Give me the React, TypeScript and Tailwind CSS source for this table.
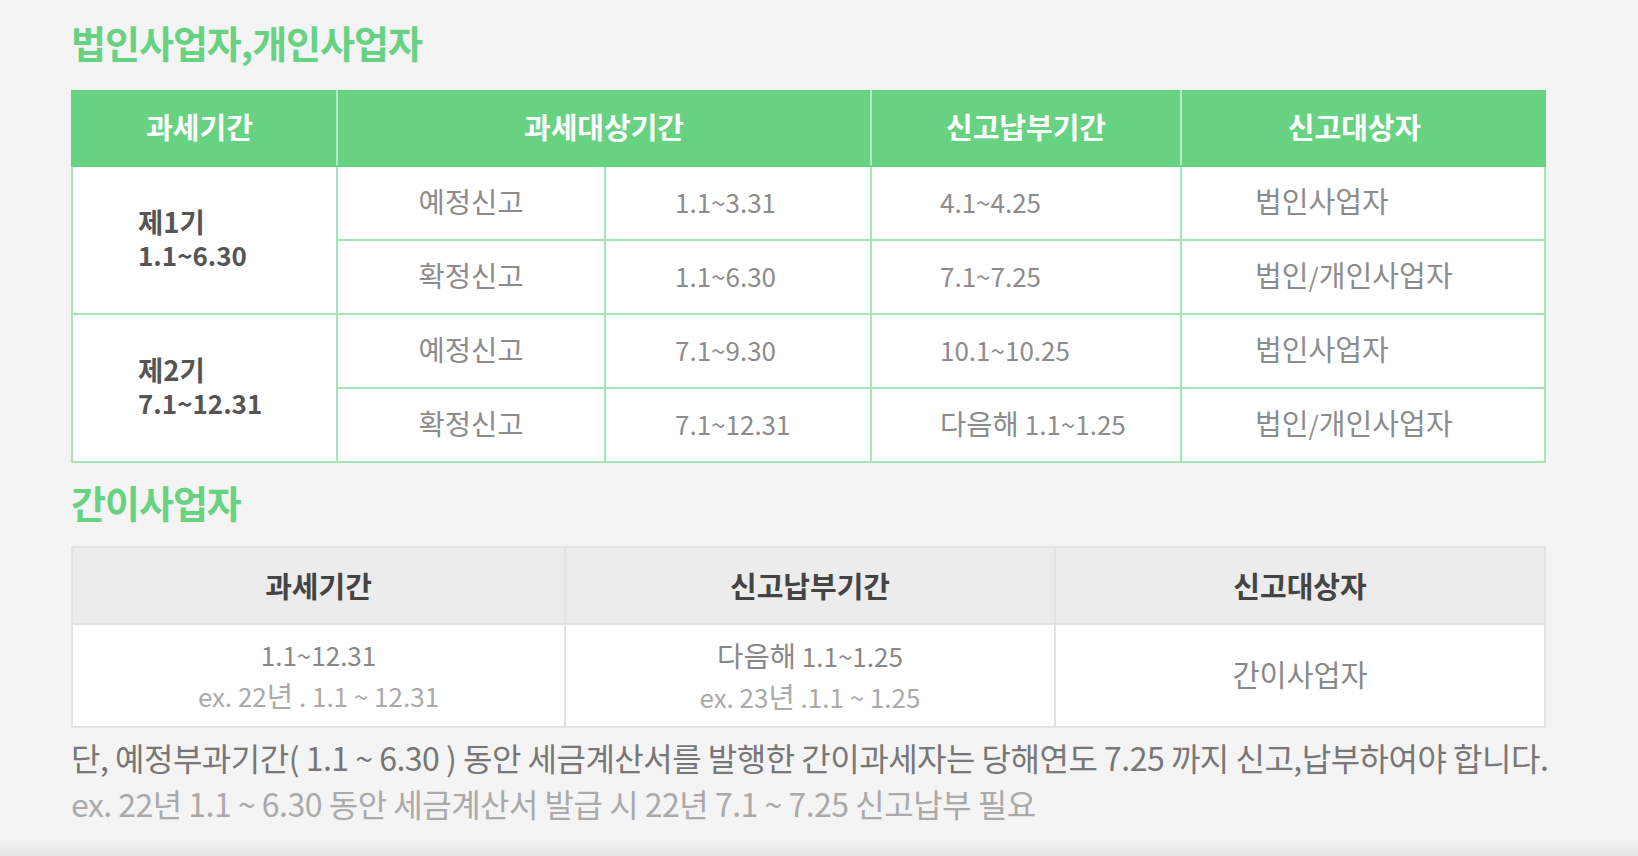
import React from "react";

// 한글만 살짝 키워서 원본 폰트 비율에 맞춤
function K({ text, big = "text-[1.1em]" }: { text: string; big?: string }) {
    const parts = text.split(/([가-힣]+)/);
    return (
        <>
            {parts.map((p, i) =>
                /[가-힣]/.test(p) ? <span key={i} className={big}>{p}</span> : <React.Fragment key={i}>{p}</React.Fragment>
            )}
        </>
    );
}

const rows = [
    { period: ["제1기", "1.1~6.30"], items: [
        ["예정신고", "1.1~3.31", "4.1~4.25", "법인사업자"],
        ["확정신고", "1.1~6.30", "7.1~7.25", "법인/개인사업자"],
    ] },
    { period: ["제2기", "7.1~12.31"], items: [
        ["예정신고", "7.1~9.30", "10.1~10.25", "법인사업자"],
        ["확정신고", "7.1~12.31", "다음해 1.1~1.25", "법인/개인사업자"],
    ] },
];

export default function App() {
    return (
        <div className="w-[1638px] h-[856px] bg-[#f4f4f4] font-['Noto_Sans_CJK_KR',sans-serif] pl-[71px] relative overflow-hidden">
            <div className="h-[90px] pb-[8px] flex items-center">
                <h1 className="text-[38px] font-bold text-[#68d283] tracking-[-1px]">법인사업자,개인사업자</h1>
            </div>

            {/* 일반과세자 */}
            <table className="border-collapse w-[1473px] table-fixed">
                <colgroup>
                    <col className="w-[265px]" />
                    <col className="w-[268px]" />
                    <col className="w-[266px]" />
                    <col className="w-[310px]" />
                    <col className="w-[364px]" />
                </colgroup>
                <thead>
                    <tr className="h-[75px] bg-[#68d283] text-white text-[29px] font-bold">
                        <th className="border-2 border-[#68d283] border-r-[#b3ecc1] pb-[4px] pr-[10px]">과세기간</th>
                        <th colSpan={2} className="border-2 border-[#68d283] border-r-[#b3ecc1] pb-[4px]">과세대상기간</th>
                        <th className="border-2 border-[#68d283] border-r-[#b3ecc1] pb-[4px]">신고납부기간</th>
                        <th className="border-2 border-[#68d283] pb-[4px] pr-[17px]">신고대상자</th>
                    </tr>
                </thead>
                <tbody className="bg-white text-[26px] text-[#8c8c8c]">
                    {rows.map((r) =>
                        r.items.map((it, i) => (
                            <tr key={r.period[0] + i} className="h-[74px]">
                                {i === 0 && (
                                    <td rowSpan={2} className="border-2 border-[#a6e5b7] pl-[65px] pb-[4px] font-bold text-[#555] leading-[33px]">
                                        <div className="text-[27.5px]">{r.period[0]}</div>
                                        <div className="text-[26px]">{r.period[1]}</div>
                                    </td>
                                )}
                                <td className="border-2 border-[#a6e5b7] text-center pb-[4px]"><K text={it[0]} /></td>
                                <td className="border-2 border-[#a6e5b7] pl-[69px] pb-[4px]">{it[1]}</td>
                                <td className="border-2 border-[#a6e5b7] pl-[68px] pb-[4px]"><K text={it[2]} /></td>
                                <td className="border-2 border-[#a6e5b7] pl-[73px] pb-[4px]"><K text={it[3]} big="text-[1.12em]" /></td>
                            </tr>
                        ))
                    )}
                </tbody>
            </table>

            <div className="h-[83px] pb-[6px] flex items-center">
                <h2 className="text-[38px] font-bold text-[#68d283] tracking-[-1px]">간이사업자</h2>
            </div>

            {/* 간이과세자 */}
            <table className="border-collapse w-[1473px] table-fixed">
                <colgroup>
                    <col className="w-[493px]" />
                    <col className="w-[490px]" />
                    <col className="w-[490px]" />
                </colgroup>
                <thead>
                    <tr className="h-[77px] bg-[#ececec] text-[29px] font-bold text-[#444]">
                        <th className="border-2 border-[#e3e3e3]">과세기간</th>
                        <th className="border-2 border-[#e3e3e3]">신고납부기간</th>
                        <th className="border-2 border-[#e3e3e3]">신고대상자</th>
                    </tr>
                </thead>
                <tbody className="bg-white text-[26px] text-[#888] text-center">
                    <tr className="h-[103px]">
                        <td className="border-2 border-[#e3e3e3] leading-[40px]">
                            <div>1.1~12.31</div>
                            <div className="text-[#aaa]"><K text="ex. 22년 . 1.1 ~ 12.31" /></div>
                        </td>
                        <td className="border-2 border-[#e3e3e3] leading-[40px]">
                            <div><K text="다음해 1.1~1.25" /></div>
                            <div className="text-[#aaa]"><K text="ex. 23년 .1.1 ~ 1.25" /></div>
                        </td>
                        <td className="border-2 border-[#e3e3e3] pb-[5px]"><K text="간이사업자" big="text-[1.13em]" /></td>
                    </tr>
                </tbody>
            </table>

            <div className="pt-[6px] text-[32px] leading-[46px] tracking-[-0.5px]">
                <p className="text-[#777]">단, 예정부과기간( 1.1 ~ 6.30 ) 동안 세금계산서를 발행한 간이과세자는 당해연도 7.25 까지 신고,납부하여야 합니다.</p>
                <p className="text-[#aaa]">ex. 22년 1.1 ~ 6.30 동안 세금계산서 발급 시 22년 7.1 ~ 7.25 신고납부 필요</p>
            </div>

            <div className="absolute left-0 right-0 bottom-0 h-[18px] bg-gradient-to-b from-[#f4f4f4] to-[#e4e4e4]" />
        </div>
    );
}
